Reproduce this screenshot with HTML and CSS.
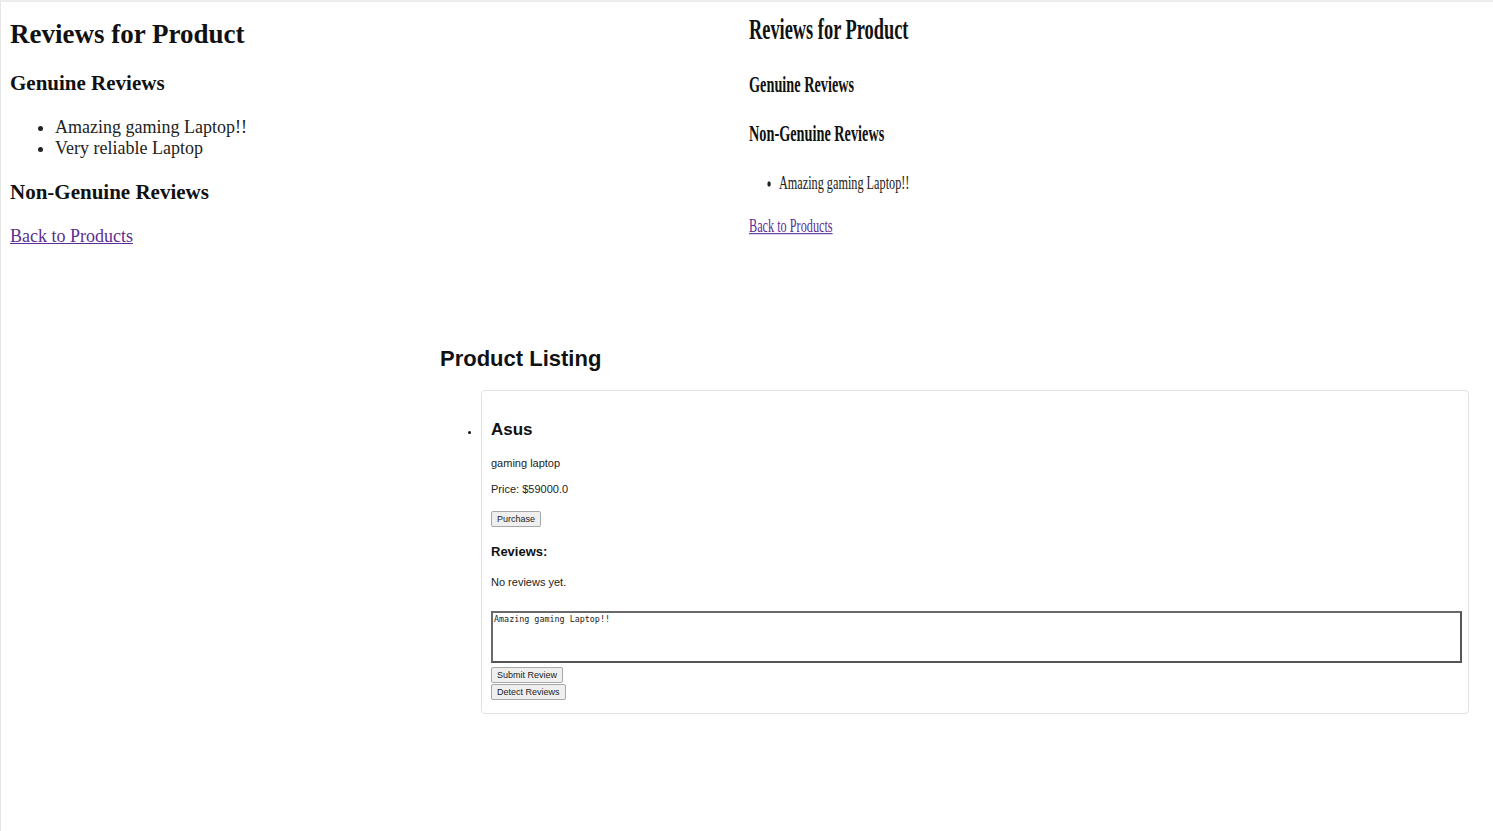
FILE: index.html
```html
<!DOCTYPE html>
<html lang="en">
<head>
<meta charset="utf-8">
<title>Reviews</title>
<link rel="stylesheet" href="styles.css">
</head>
<body>
<div class="top-row">
  <section class="reviews-left">
    <h1 class="rv-title">Reviews for Product</h1>
    <h2 class="rv-sub">Genuine Reviews</h2>
    <ul class="rv-list">
      <li>Amazing gaming Laptop!!</li>
      <li>Very reliable Laptop</li>
    </ul>
    <h2 class="rv-sub">Non-Genuine Reviews</h2>
    <p class="rv-back"><a href="#">Back to Products</a></p>
  </section>
  <section class="reviews-right">
    <div class="squeeze">
      <h1 class="rr-title">Reviews for Product</h1>
      <h2 class="rr-sub rr-gen">Genuine Reviews</h2>
      <h2 class="rr-sub rr-non">Non-Genuine Reviews</h2>
      <ul class="rr-list">
        <li>Amazing gaming Laptop!!</li>
      </ul>
      <p class="rr-back"><a href="#">Back to Products</a></p>
    </div>
  </section>
</div>

<section class="listing">
  <h2 class="listing-title">Product Listing</h2>
  <ul class="products">
    <li class="card">
      <h3 class="p-name">Asus</h3>
      <p class="p-desc">gaming laptop</p>
      <p class="p-price">Price: $59000.0</p>
      <button class="btn btn-purchase" type="button">Purchase</button>
      <h4 class="p-reviews">Reviews:</h4>
      <p class="p-none">No reviews yet.</p>
      <textarea class="p-input">Amazing gaming Laptop!!</textarea>
      <button class="btn btn-submit" type="button">Submit Review</button>
      <button class="btn btn-detect" type="button">Detect Reviews</button>
    </li>
  </ul>
</section>
</body>
</html>
```

FILE: styles.css
```css
html, body {
  margin: 0;
  padding: 0;
  background: #ffffff;
}
body {
  min-height: 100vh;
  box-sizing: border-box;
  border-top: 2px solid #ececec;
  border-left: 1px solid #e6e6e6;
  font-family: "Liberation Serif", "Times New Roman", serif;
  color: #111;
}

.top-row {
  display: flex;
  align-items: flex-start;
}

/* left review page */
.reviews-left {
  width: 748px;
  box-sizing: border-box;
  padding-left: 9px;
  display: flow-root;
}
.rv-title {
  font-size: 27px;
  line-height: 32px;
  margin: 16px 0 21px;
  font-weight: bold;
}
.rv-sub {
  font-size: 21px;
  line-height: 25px;
  margin: 21px 0;
  font-weight: bold;
}
.rv-list {
  margin: 21px 0;
  padding-left: 45px;
  font-size: 18px;
  line-height: 21px;
  color: #222;
}
.rv-back {
  margin: 21px 0;
  font-size: 18px;
  line-height: 21px;
}
a {
  color: #5b2e94;
}

/* right review page (squeezed) */
.reviews-right {
  flex: 1;
}
.squeeze {
  width: 600px;
  transform: scale(0.68, 1.08);
  transform-origin: 0 0;
  display: flow-root;
}
.rr-title {
  font-size: 27px;
  line-height: 32px;
  margin: 9px 0 0;
  font-weight: bold;
}
.rr-sub {
  font-size: 21px;
  line-height: 25px;
  margin: 0;
  font-weight: bold;
}
.rr-gen { margin-top: 23px; }
.rr-non { margin-top: 21px; }
.rr-list {
  margin: 22px 0 0;
  padding-left: 44px;
  font-size: 18px;
  line-height: 21px;
  color: #222;
}
.rr-back {
  margin: 19px 0 0;
  font-size: 18px;
  line-height: 21px;
}

/* product listing */
.listing {
  margin: 78px 0 0 439px;
  width: 1029px;
  font-family: "Liberation Sans", Arial, sans-serif;
  display: flow-root;
}
.listing-title {
  font-size: 22px;
  line-height: 26px;
  margin: 0;
  font-weight: bold;
  color: #111;
}
.products {
  margin: 18px 0 0;
  padding-left: 41px;
  font-size: 11px;
}
.card {
  display: list-item;
  border: 1px solid #e2e2e2;
  border-radius: 4px;
  padding: 1px 6px 13px 9px;
}
.p-name {
  font-size: 17px;
  line-height: 20px;
  margin: 28px 0 0;
  font-weight: bold;
}
.p-desc, .p-price, .p-none {
  font-size: 11px;
  line-height: 13px;
  margin: 0;
  color: #222;
}
.p-desc { margin-top: 17px; }
.p-price { margin-top: 13px; }
.btn {
  display: block;
  font-family: "Liberation Sans", Arial, sans-serif;
  font-size: 9px;
  line-height: 12px;
  padding: 1px 5px 1px;
  border: 1px solid #a8a8a8;
  border-radius: 2px;
  background: #efefef;
  color: #222;
  margin: 0;
}
.btn-purchase { margin-top: 15px; }
.p-reviews {
  font-size: 13px;
  line-height: 15px;
  font-weight: bold;
  margin: 17px 0 0;
}
.p-none { margin-top: 17px; }
.p-input {
  display: block;
  box-sizing: border-box;
  width: 100%;
  height: 52px;
  margin: 22px 0 0;
  padding: 1px;
  border: 2px solid #555;
  border-top-color: #6a6a6a;
  border-left-color: #6a6a6a;
  font-family: "DejaVu Sans Mono", "Liberation Mono", monospace;
  font-size: 8.4px;
  line-height: 10px;
  color: #222;
  resize: none;
}
.btn-submit { margin-top: 4px; }
.btn-detect { margin-top: 1px; }
```
